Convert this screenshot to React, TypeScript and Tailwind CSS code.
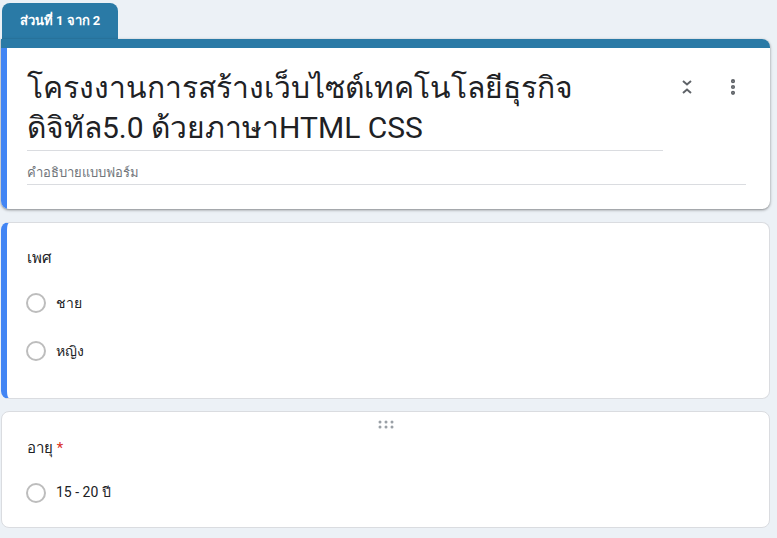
import { MoreVertical } from 'lucide-react';

function Radio({ label, indent }: { label: string; indent: string }) {
  return (
    <div className="flex h-12 items-center gap-[10px]">
      <span className={`${indent} h-5 w-5 rounded-full border-2 border-[#bdbdbd]`} />
      <span className="text-[14px] text-[#202124]">{label}</span>
    </div>
  );
}

function CollapseIcon() {
  return (
    <svg width="12" height="18" viewBox="0 0 12 18" fill="none" stroke="#5f6368" strokeWidth="2">
      <path d="M2 3l4 3.5 4-3.5" />
      <path d="M2 15l4-3.5 4 3.5" />
    </svg>
  );
}

export default function App() {
  return (
    <main
      className="min-h-[538px] bg-[#ecf1f6] pl-px pr-[7px] pt-[3px]"
      style={{ fontFamily: 'Roboto, "Noto Sans", "DejaVu Sans", sans-serif' }}
    >
      <div className="ml-px flex h-9 w-[116px] items-center justify-center rounded-t-lg bg-[#2a7aa6] text-[13px] font-bold text-white">
        ส่วนที่ 1 จาก 2
      </div>

      <section className="overflow-hidden rounded-lg rounded-tl-none bg-white shadow-[0_1px_2px_rgba(0,0,0,0.3),0_1px_3px_1px_rgba(0,0,0,0.12)]">
        <div className="h-[9px] bg-[#2a7aa6]" />
        <div className="flex border-l-[6px] border-[#4285f4]">
          <div className="flex-1 pb-6 pl-5 pr-6 pt-[20px]">
            <div className="flex">
              <h1 className="w-[636px] border-b border-[#dadce0] pb-0.5 text-[30px] leading-[40px] text-[#202124]">
                โครงงานการสร้างเว็บไซต์เทคโนโลยีธุรกิจ ดิจิทัล5.0 ด้วยภาษาHTML CSS
              </h1>
              <div className="ml-auto flex gap-[30px] pr-[3px] pt-[10px]">
                <CollapseIcon />
                <MoreVertical size={20} color="#5f6368" strokeWidth={3} className="-mt-px" />
              </div>
            </div>
            <p className="mt-[12px] border-b border-[#dadce0] pb-[1px] text-[13px] text-[#70757a]">
              คำอธิบายแบบฟอร์ม
            </p>
          </div>
        </div>
      </section>

      <section className="mt-[13px] rounded-lg border border-[#dadce0] border-l-[6px] border-l-[#4285f4] bg-white pb-[23px] pt-[24px]">
        <p className="pl-5 text-[15px] text-[#202124]">เพศ</p>
        <div className="mt-[10px]">
          <Radio label="ชาย" indent="ml-[19px]" />
          <Radio label="หญิง" indent="ml-[19px]" />
        </div>
      </section>

      <section className="mt-3 h-[117px] rounded-lg border border-[#dadce0] bg-white">
        <div className="flex justify-center pt-[8px]">
          <svg width="16" height="10" viewBox="0 0 16 10" fill="#9aa0a6">
            <circle cx="2" cy="2" r="1.5" />
            <circle cx="8" cy="2" r="1.5" />
            <circle cx="14" cy="2" r="1.5" />
            <circle cx="2" cy="7" r="1.5" />
            <circle cx="8" cy="7" r="1.5" />
            <circle cx="14" cy="7" r="1.5" />
          </svg>
        </div>
        <p className="mt-[7px] pl-[25px] text-[15px] text-[#202124]">
          อายุ <span className="text-[#d93025]">*</span>
        </p>
        <div className="mt-[9px]">
          <Radio label="15 - 20 ปี" indent="ml-[24px]" />
        </div>
      </section>
    </main>
  );
}
